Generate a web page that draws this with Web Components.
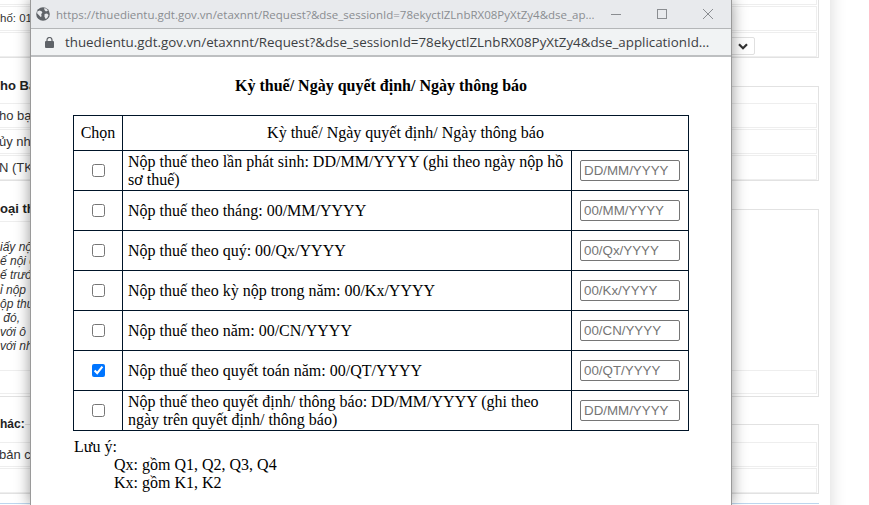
<!DOCTYPE html>
<html lang="vi"><head><meta charset="utf-8"><title>Kỳ thuế</title>
<style>html,body{margin:0;padding:0;background:#fff;overflow:hidden;width:869px;height:505px}</style>
</head><body>
<x-desktop>
  <x-page>
    <x-panel first style="--top:-21px">
      <x-row></x-row><x-row style="--ind:0px;font-size:11.5px">hố: 01</x-row><x-row></x-row>
    </x-panel>
    <x-panel legend="ho Ba" style="--top:19px">
      <x-row>ho bạ</x-row><x-row>ủy nh</x-row><x-row>N (TK</x-row>
    </x-panel>
    <x-panel legend="oại th" style="--top:19px;--sp:3px;--pb:2px">
      <x-note>iấy nộ
ế nội c
ế trướ
ỉ nộp
ộp thu
 đó,
với ô
với nh</x-note>
      <x-row style="--h:24px"></x-row>
    </x-panel>
    <x-panel legend="hác:" style="--top:18px;--sp:9px;--lfs:12px">
      <x-row>bản c</x-row><x-row></x-row>
    </x-panel>
    <x-strip></x-strip>
  </x-page>
  <x-select-stub></x-select-stub>
  <x-popup>
    <span slot="tab">https://thuedientu.gdt.gov.vn/etaxnnt/Request?&amp;dse_sessionId=78ekyctlZLnbRX08PyXtZy4&amp;dse_ap...</span>
    <span slot="url">thuedientu.gdt.gov.vn/etaxnnt/Request?&amp;dse_sessionId=78ekyctlZLnbRX08PyXtZy4&amp;dse_applicationId...</span>
    <x-heading>Kỳ thuế/ Ngày quyết định/ Ngày thông báo</x-heading>
    <x-tax-table>
      <x-tax-head></x-tax-head>
      <x-tax-row placeholder="DD/MM/YYYY">Nộp thuế theo lần phát sinh: DD/MM/YYYY (ghi theo ngày nộp hồ sơ thuế)</x-tax-row>
      <x-tax-row placeholder="00/MM/YYYY">Nộp thuế theo tháng: 00/MM/YYYY</x-tax-row>
      <x-tax-row placeholder="00/Qx/YYYY">Nộp thuế theo quý: 00/Qx/YYYY</x-tax-row>
      <x-tax-row placeholder="00/Kx/YYYY">Nộp thuế theo kỳ nộp trong năm: 00/Kx/YYYY</x-tax-row>
      <x-tax-row placeholder="00/CN/YYYY">Nộp thuế theo năm: 00/CN/YYYY</x-tax-row>
      <x-tax-row placeholder="00/QT/YYYY" checked>Nộp thuế theo quyết toán năm: 00/QT/YYYY</x-tax-row>
      <x-tax-row placeholder="DD/MM/YYYY" tall>Nộp thuế theo quyết định/ thông báo: DD/MM/YYYY (ghi theo ngày trên quyết định/ thông báo)</x-tax-row>
    </x-tax-table>
    <x-notes>
      <div>Lưu ý:</div>
      <div class="in">Qx: gồm Q1, Q2, Q3, Q4</div>
      <div class="in">Kx: gồm K1, K2</div>
    </x-notes>
  </x-popup>
</x-desktop>
<script>
function def(name, css, html){
  customElements.define(name, class extends HTMLElement{
    connectedCallback(){
      if(this.shadowRoot) return;
      const r=this.attachShadow({mode:'open'});
      r.innerHTML='<style>'+css+'</style>'+(typeof html==='function'?html(this):html);
    }
  });
}
def('x-desktop',':host{display:block;position:relative;width:869px;height:505px;overflow:hidden;background:#fff;font-family:"Liberation Sans",Arial,sans-serif}','<slot></slot>');
def('x-page',':host{display:block;width:830px;height:560px;background:#fff;box-shadow:0 0 16px rgba(0,0,0,.16);color:#333;font:13px "Liberation Sans",Arial,sans-serif}','<slot></slot>');
def('x-panel',`:host{display:block;margin-top:var(--top,0);width:821px;margin-left:-2px}
 fieldset{margin:0;padding:0 1px var(--pb,0) 3px;border:1px solid #e2e2e2;min-width:0;display:flex;flex-direction:column;gap:1px}
 legend{padding:0;margin-left:-2px;height:18px;line-height:18px;font-weight:bold;color:#222;font-size:var(--lfs,13px)}
 .sp{height:var(--sp,8px);margin-bottom:-1px}`,
 el=>{const l=el.getAttribute('legend');return '<fieldset>'+(l?'<legend>'+l+'</legend><div class="sp"></div>':'')+'<slot></slot></fieldset>'});
def('x-row',':host{display:block;height:var(--h,25px);box-sizing:border-box;border:1px solid #eee;line-height:23px;margin-left:-3px;white-space:nowrap;overflow:hidden;text-indent:var(--ind,-1px);color:#333}','<slot></slot>');
def('x-note',`:host{display:block;height:148px;box-sizing:border-box;white-space:pre;font-style:italic;font-size:12px;line-height:14.2px;color:#333;margin-left:-2px}
 div{width:200px;border-top:1px solid #eee;padding-top:18px}`,'<div><slot></slot></div>');
def('x-strip',':host{display:block;margin-top:9px;width:819px;height:10px;background:#fff;border-top:1px solid #bcd6ee}','');
def('x-select-stub',`:host{position:absolute;left:725px;top:37px;width:30px;height:18px;box-sizing:border-box;border:1px solid #e0e0e0;border-radius:2px;background:#fff;display:flex;align-items:center;justify-content:flex-end;padding-right:6px}`,
 '<svg width="10" height="7" viewBox="0 0 10 7"><path d="M1 1.2 5 5.2 9 1.2" fill="none" stroke="#333" stroke-width="2.2"/></svg>');
def('x-popup',`:host{position:absolute;left:30px;top:0;width:702px;height:505px;box-sizing:border-box;border-left:1px solid #9a9a9a;border-right:1px solid #9a9a9a;background:#fff;box-shadow:0 0 14px rgba(0,0,0,.42);display:flex;flex-direction:column;overflow:hidden}
 .tb{height:28px;flex:none;background:#e8eaed;border-bottom:1px solid #b4b6b8;display:flex;align-items:center;padding-left:5px;font:11.5px "Open Sans",sans-serif;color:#8a8d91;white-space:nowrap}
 .tb svg.g{flex:none;margin-right:6px}
 .tb .t{width:538px;overflow:hidden;flex:none}
 .ctl{display:flex;margin-left:17px;align-items:center}
 .ctl svg{display:block;margin-right:36px;flex:none}
 .ab{height:26px;flex:none;background:#f1f3f4;border-bottom:2px solid #bdbfc1;box-sizing:content-box;display:flex;align-items:center;padding-left:14px;font:13.35px "Open Sans",sans-serif;color:#3c4043;white-space:nowrap}
 .ab svg{flex:none;margin-right:11px}
 .c{flex:1;padding:20px 42px 0;font:16px "Liberation Serif","Times New Roman",serif;color:#000}`,
 `<div class="tb"><svg class="g" width="14" height="14" viewBox="0 0 14 14"><circle cx="7" cy="7" r="6.8" fill="#5f6368"/><path d="M1.2 4.6 3.6 3.4 5.6 4.2 6.4 5.8 5.2 7 5.6 9.2 4.6 10 2.8 8 1.2 6.6ZM8 1.2 10.2 1.6 12 3.6 10 4.4 8.6 3.2ZM8.6 7 11 6.6 12.6 8 11.2 11 9.6 12 8.4 9.6Z" fill="#e8eaed"/></svg><span class="t"><slot name="tab"></slot></span><div class="ctl">
 <svg width="10" height="10" viewBox="0 0 10 10"><path d="M0 5.5H10" stroke="#8a8d91"/></svg>
 <svg width="10" height="10" viewBox="0 0 10 10"><rect x=".5" y=".5" width="9" height="9" fill="none" stroke="#8a8d91"/></svg>
 <svg width="10" height="10" viewBox="0 0 10 10"><path d="M0 0 10 10M10 0 0 10" stroke="#8a8d91"/></svg></div></div>
 <div class="ab"><svg width="9" height="11" viewBox="0 0 9 11"><path d="M2 4.5V3a2.5 2.5 0 0 1 5 0V4.500" fill="none" stroke="#5f6368" stroke-width="1.2"/><rect y="4" width="9" height="7" rx="1" fill="#5f6368"/></svg><slot name="url"></slot></div>
 <div class="c"><slot></slot></div>`);
def('x-heading',':host{display:block;text-align:center;font-weight:bold;font-size:16px;line-height:18px;margin:0 0 20px}','<slot></slot>');
def('x-tax-table',':host{display:block;width:616px;box-sizing:border-box;border:1px solid #001428}','<slot></slot>');
const rowCss=`:host{display:grid;grid-template-columns:48px 1px 448px 1px 116px;border-top:1px solid #001428;height:39px;--ln:#001428}
 .v{background:var(--ln)}
 .a{display:flex;align-items:center;justify-content:center}
 .b{padding:0 5px;display:flex;align-items:center;line-height:17.5px}
 .d{display:flex;align-items:center;padding-left:8px}
 input[type=checkbox]{margin:0;width:13px;height:13px}
 input[type=text]{box-sizing:border-box;width:100px;height:21px;margin:0;padding:1px 3px;font:13.3333px "Liberation Sans",Arial,sans-serif;border:1px solid #767676;border-radius:2px;background:#fff}`;
def('x-tax-row',rowCss,el=>`<div class="a"><input type="checkbox" ${el.hasAttribute('checked')?'checked':''}></div><div class="v"></div><div class="b"><span><slot></slot></span></div><div class="v"></div><div class="d"><input type="text" placeholder="${el.getAttribute('placeholder')}"></div>`);
def('x-tax-head',`:host{display:grid;grid-template-columns:48px 1px 565px;height:34px;line-height:34px}
 .v{background:#001428} .a{text-align:center} .b{text-align:center}`,'<div class="a">Chọn</div><div class="v"></div><div class="b">Kỳ thuế/ Ngày quyết định/ Ngày thông báo</div>');
def('x-notes',`:host{display:block;margin-top:7px;margin-left:1px;line-height:18px} ::slotted(.in){padding-left:40px}`,'<slot></slot>');
</script>
</body></html>
